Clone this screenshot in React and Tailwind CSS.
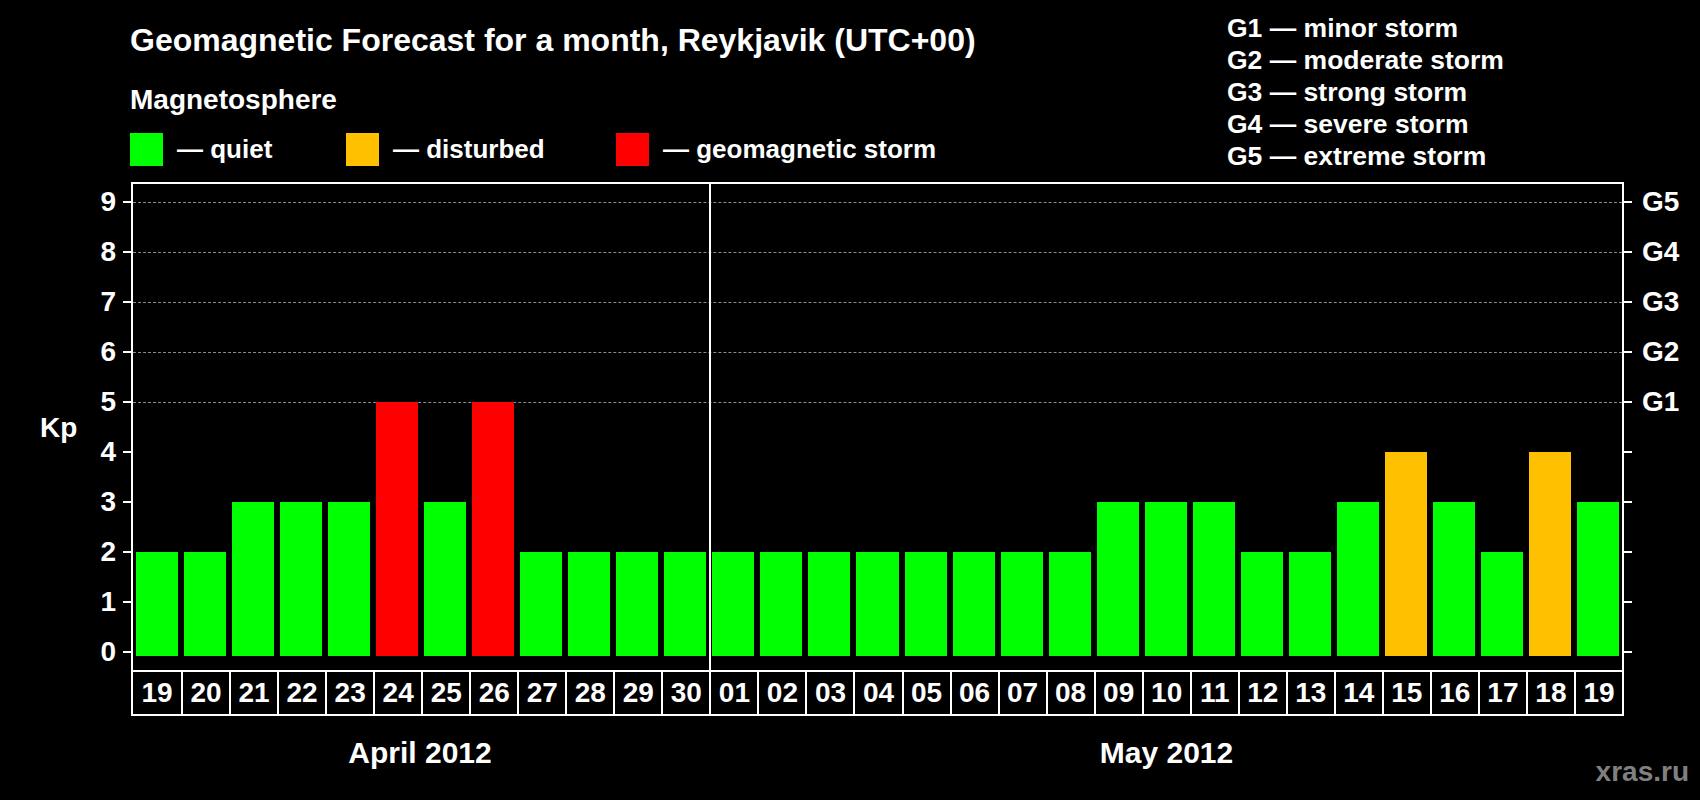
const april = [2,2,3,3,3,5,3,5,2,2,2,2];
const may = [2,2,2,2,2,2,2,2,3,3,3,2,2,3,4,3,2,4,3];
const aprDays = Array.from({length:12},(_,i)=>String(19+i));
const mayDays = Array.from({length:19},(_,i)=>String(i+1).padStart(2,"0"));
const data = [...april.map((v,i)=>({d:aprDays[i],v})), ...may.map((v,i)=>({d:mayDays[i],v}))];
const color = v => v>=5 ? "bg-[#ff0000]" : v===4 ? "bg-[#ffc000]" : "bg-[#00ff00]";
const levels = [0,1,2,3,4,5,6,7,8,9];
const gl = {5:"G1",6:"G2",7:"G3",8:"G4",9:"G5"};

export default function App(){
  return (
    <div className="relative w-[1700px] h-[800px] bg-black text-white font-bold overflow-hidden" style={{fontFamily:'"Liberation Sans", Arial, sans-serif'}}>
      <div className="flex h-[166px] items-start">
        <div className="ml-[130px] w-[1097px]">
          <div className="mt-[22px] h-[36px] leading-[36px] text-[32px]">Geomagnetic Forecast for a month, Reykjavik (UTC+00)</div>
          <div className="mt-[27px] h-[30px] leading-[30px] text-[28px]">Magnetosphere</div>
          <div className="mt-[18px] flex h-[33px] items-center">
            <div className="w-[216px] flex items-center gap-[14px]"><div className="w-[33px] h-[33px] bg-[#00ff00]"/><span className="text-[26px]">— quiet</span></div>
            <div className="w-[270px] flex items-center gap-[14px]"><div className="w-[33px] h-[33px] bg-[#ffc000]"/><span className="text-[26px]">— disturbed</span></div>
            <div className="flex items-center gap-[14px]"><div className="w-[33px] h-[33px] bg-[#ff0000]"/><span className="text-[26px]">— geomagnetic storm</span></div>
          </div>
        </div>
        <div className="pt-[12px] text-[26.5px] leading-[32px]">
          <div>G1 — minor storm</div>
          <div>G2 — moderate storm</div>
          <div>G3 — strong storm</div>
          <div>G4 — severe storm</div>
          <div>G5 — extreme storm</div>
        </div>
      </div>

      <div className="mt-[16px] flex">
        <div className="relative w-[131px] h-[488px] shrink-0">
          <div className="absolute left-[40px] top-[229px] text-[28px] leading-[34px]">Kp</div>
          {levels.map(v=>(
            <div key={v}>
              <div className="absolute right-[15px] text-[28px] leading-[30px]" style={{top:470-50*v-15}}>{v}</div>
              <div className="absolute right-0 w-[8px] h-[2px] bg-white" style={{top:470-50*v-1}}/>
            </div>
          ))}
        </div>
        <div className="w-[1493px] shrink-0">
          <div className="relative h-[488px] border-l-2 border-t-2 border-r-2 border-white box-border">
            {[5,6,7,8,9].map(v=>(
              <div key={v} className="absolute left-0 right-0 border-t border-dashed border-[#8a8a8a]" style={{top:470-50*v-2}}/>
            ))}
            <div className="absolute top-0 bottom-0 left-[576px] w-[2px] bg-white"/>
            <div className="relative h-full grid grid-cols-[repeat(31,1fr)] items-end pb-[14px]">
              {data.map((x,i)=>(
                <div key={i} className="px-[3px]">
                  <div className={color(x.v)} style={{height:4+50*x.v}}/>
                </div>
              ))}
            </div>
          </div>
          <div className="grid grid-cols-[repeat(31,1fr)] h-[46px] border-2 border-white box-border">
            {data.map((x,i)=>(
              <div key={i} className={`flex items-center justify-center text-[28px] ${i>0?"border-l-2 border-white":""}`}>{x.d}</div>
            ))}
          </div>
          <div className="grid grid-cols-[578px_915px] h-[72px] items-center text-[30px] text-center">
            <div>April 2012</div>
            <div>May 2012</div>
          </div>
        </div>
        <div className="relative h-[488px] flex-1">
          {levels.map(v=>(
            <div key={v}>
              <div className="absolute left-0 w-[8px] h-[2px] bg-white" style={{top:470-50*v-1}}/>
              {gl[v] && <div className="absolute left-[18px] text-[28px] leading-[30px]" style={{top:470-50*v-15}}>{gl[v]}</div>}
            </div>
          ))}
        </div>
      </div>
      <div className="absolute right-[11px] top-[755px] text-[28px] leading-[34px] text-[#808080]">xras.ru</div>
    </div>
  );
}
